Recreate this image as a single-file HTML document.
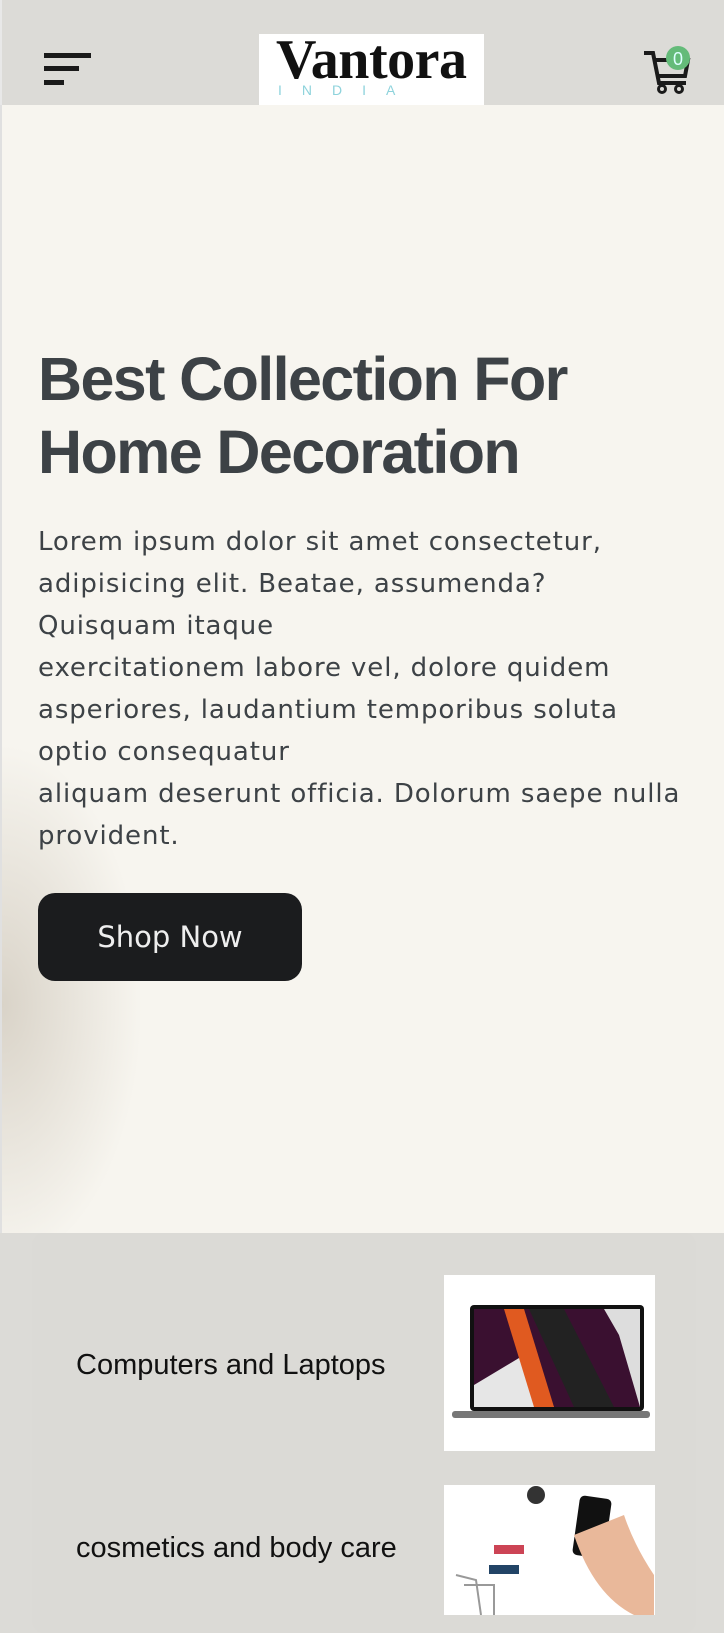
<!DOCTYPE html>
<html><head><meta charset="utf-8"><style>
*{margin:0;padding:0;box-sizing:border-box}
body{width:724px;height:1608px;overflow:hidden;background:#dcdbd7;font-family:"Liberation Sans",sans-serif;position:relative}
.hdr{position:absolute;left:0;top:0;width:724px;height:105px;background:#dcdbd7;border-left:2px solid #e8e8e8}
.hero{position:absolute;left:0;top:105px;width:724px;height:1128px;border-left:2px solid #e0e0e0;
background:radial-gradient(ellipse 140px 260px at 0px 900px,#d9d3c8,rgba(247,245,239,0) 100%),#f7f5ef}
.logo{position:absolute;left:257px;top:34px;width:225px;height:71px;background:#fff}
.logo .v{position:absolute;left:17px;top:-6px;font-family:"Liberation Serif",serif;font-size:56px;font-weight:bold;color:#111;letter-spacing:-0.5px}
.logo .i{position:absolute;left:19px;top:48px;font-size:14px;color:#8ed3dc;letter-spacing:20px}
.bar{position:absolute;left:42px;height:5px;background:#1a1a1a}
h1{position:absolute;left:38px;top:343px;font-size:61px;line-height:73px;color:#3d4246;font-weight:bold;letter-spacing:-1.6px}
p{position:absolute;left:38px;top:521px;font-family:"DejaVu Sans",sans-serif;font-size:26px;line-height:42px;color:#3d4246;letter-spacing:0.9px}
.btn{position:absolute;left:38px;top:893px;width:264px;height:88px;background:#1b1c1e;border-radius:17px;color:#eee;font-family:"DejaVu Sans",sans-serif;font-size:29px;text-align:center;line-height:88px}
.card{position:absolute;left:32px;top:1233px;width:664px;height:400px;background:#dbdad6;border-radius:12px}
.t{position:absolute;left:76px;font-size:29px;color:#111}
.img{position:absolute;left:444px;width:211px;background:#fff}
</style></head><body>
<div class="hdr">
<div class="bar" style="top:53px;width:47px"></div>
<div class="bar" style="top:66px;width:35px"></div>
<div class="bar" style="top:80px;width:20px"></div>
<div class="logo"><span class="v">Vantora</span><span class="i">INDIA</span></div>
<svg style="position:absolute;left:640px;top:46px" width="50" height="50" viewBox="0 0 50 50">
<path d="M2 7h9l6 30h27M12 14h34l-3 16H16" fill="none" stroke="#1a1a1a" stroke-width="4"/>
<circle cx="20" cy="43" r="3.5" fill="none" stroke="#1a1a1a" stroke-width="3"/>
<circle cx="37" cy="43" r="3.5" fill="none" stroke="#1a1a1a" stroke-width="3"/>
<circle cx="36" cy="12" r="12" fill="#64bb79"/>
<text x="36" y="19" font-size="18" text-anchor="middle" fill="#dff" font-family="Liberation Sans">0</text>
</svg>
</div>
<div class="hero"></div>
<h1>Best Collection For<br>Home Decoration</h1>
<p>Lorem ipsum dolor sit amet consectetur,<br>adipisicing elit. Beatae, assumenda?<br>Quisquam itaque<br>exercitationem labore vel, dolore quidem<br>asperiores, laudantium temporibus soluta<br>optio consequatur<br>aliquam deserunt officia. Dolorum saepe nulla<br>provident.</p>
<div class="btn">Shop Now</div>
<div class="card"></div>
<div class="t" style="top:1349px">Computers and Laptops</div>
<div class="img" style="top:1275px;height:176px">
<svg width="211" height="176" viewBox="0 0 211 176">
<rect x="26" y="30" width="174" height="106" rx="4" fill="#111"/>
<rect x="30" y="34" width="166" height="98" fill="#3a1030"/>
<path d="M30 110 L80 80 L110 132 L30 132Z" fill="#e6e6e6"/>
<path d="M60 34 L90 132 L110 132 L80 34Z" fill="#e05a20"/>
<path d="M85 34 L130 132 L170 132 L120 34Z" fill="#222"/>
<path d="M160 34 L196 34 L196 132 L175 60Z" fill="#ddd"/>
<rect x="8" y="136" width="198" height="7" rx="3" fill="#777"/>
</svg></div>
<div class="t" style="top:1532px">cosmetics and body care</div>
<div class="img" style="top:1485px;height:130px">
<svg width="211" height="130" viewBox="0 0 211 130">
<rect x="132" y="12" width="32" height="60" rx="5" fill="#111" transform="rotate(8 148 42)"/>
<path d="M130 50 q20 60 60 80 h20 v-40 q-20-30-30-60z" fill="#e9b89a"/>
<circle cx="92" cy="10" r="9" fill="#333"/>
<rect x="50" y="60" width="30" height="9" fill="#cc4455"/>
<rect x="45" y="80" width="30" height="9" fill="#224466"/>
<path d="M12 90 l20 5 5 35 M20 100 h30 v30" fill="none" stroke="#999" stroke-width="2"/>
</svg></div>
</body></html>
